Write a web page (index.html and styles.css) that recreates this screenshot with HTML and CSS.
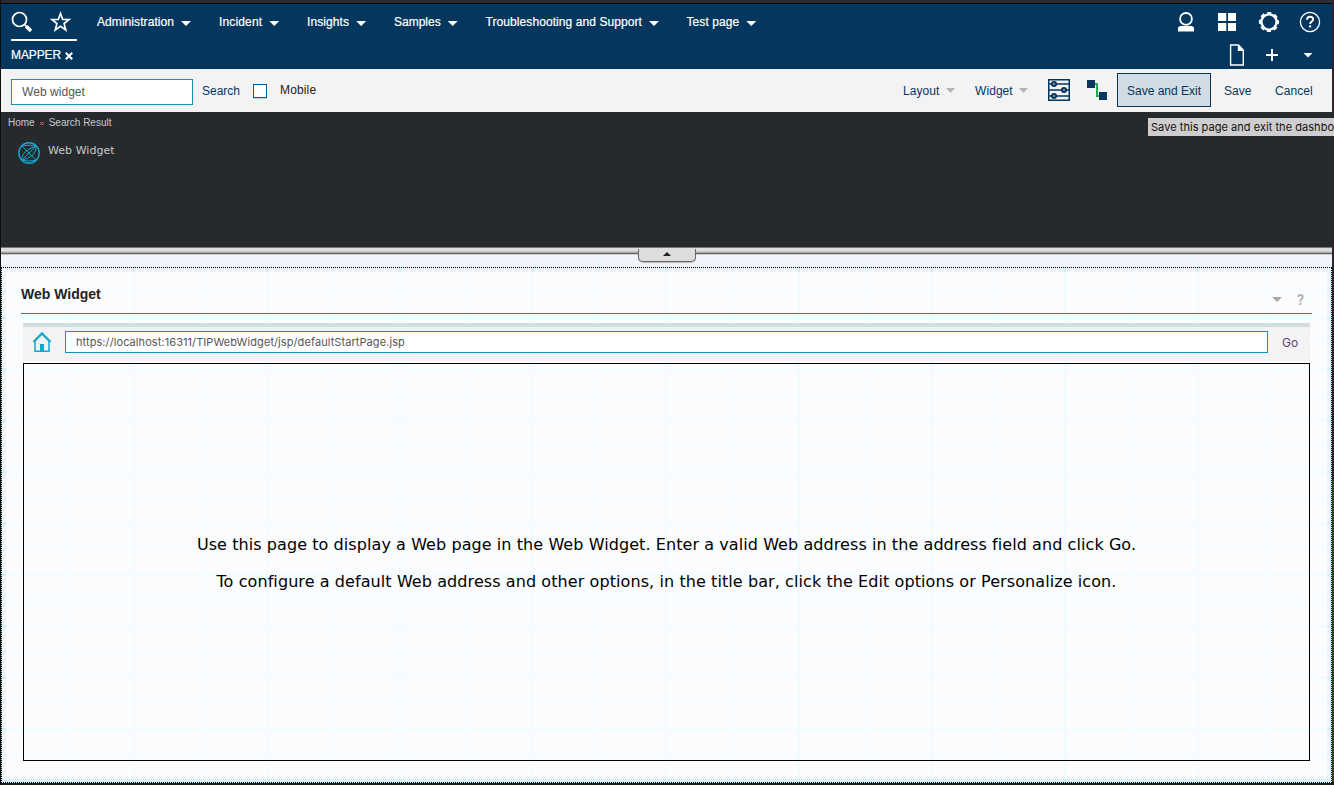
FILE: index.html
```html
<!DOCTYPE html>
<html lang="en">
<head>
<meta charset="utf-8">
<title>Mapper</title>
<link rel="stylesheet" href="styles.css">
</head>
<body>
<div class="app">
  <header class="header">
    <div class="quick">
      <svg class="quick-icon" width="22" height="22" viewBox="0 0 22 22"><circle cx="8.5" cy="8.5" r="7" fill="none" stroke="#fff" stroke-width="1.7"/><path d="M13.5 13.5l2 2" stroke="#fff" stroke-width="1.7"/><path d="M15.200 15.200l4.800 4.800" stroke="#fff" stroke-width="3.600"/></svg>
      <svg class="quick-icon" width="22" height="22" viewBox="0 0 22 22"><path d="M10.500 2.500l2.200 6H19l-4.900 4.100 1.700 6.400-5.300-3.600-5.300 3.600 1.700-6.400L2 8.500h6.300z" fill="none" stroke="#fff" stroke-width="1.700"/></svg>
    </div>
    <nav class="nav">
      <span class="nav-item w-admin">Administration<i class="caret"></i></span>
      <span class="nav-item w-incident">Incident<i class="caret"></i></span>
      <span class="nav-item w-insights">Insights<i class="caret"></i></span>
      <span class="nav-item w-samples">Samples<i class="caret"></i></span>
      <span class="nav-item w-support">Troubleshooting and Support<i class="caret"></i></span>
      <span class="nav-item w-test">Test page<i class="caret"></i></span>
    </nav>
    <div class="tools">
      <svg width="18" height="22" viewBox="0 0 18 22"><circle cx="9" cy="7.900" r="5.900" fill="none" stroke="#fff" stroke-width="1.800"/><path d="M1 20.500v-4l2-1.500h12l2 1.500v4z" fill="#fff"/></svg>
      <svg width="18" height="22" viewBox="0 0 18 22"><path d="M0 2h8.300v8H0zM10 2h8v8h-8zM0 12h8.300v8H0zM10 12h8v8h-8z" fill="#fff"/></svg>
      <svg width="22" height="22" viewBox="0 0 22 22"><circle cx="11" cy="11" r="7.600" fill="none" stroke="#fff" stroke-width="2.400"/><circle cx="11" cy="11" r="9" fill="none" stroke="#fff" stroke-width="2.200" stroke-dasharray="4 3.069" stroke-dashoffset="2"/></svg>
      <svg width="22" height="22" viewBox="0 0 22 22"><circle cx="11" cy="11" r="9.600" fill="none" stroke="#fff" stroke-width="1.300"/><path d="M8 8.800c0-4.100 6.200-3.900 6.200-.5 0 2.200-3.100 2.200-3.100 4.800" fill="none" stroke="#fff" stroke-width="1.900"/><path d="M10 14.400h2.200v2H10z" fill="#fff"/></svg>
    </div>
    <div class="tab">MAPPER<svg width="8" height="8" viewBox="0 0 8 8"><path d="M.8 .8l6.400 6.400M7.200 .8L.8 7.200" stroke="#fff" stroke-width="2"/></svg></div>
    <div class="page-tools">
      <svg width="16" height="22" viewBox="0 0 16 22"><path d="M1.600 1h7.800l4.900 5v15H1.600z" fill="none" stroke="#fff" stroke-width="1.400"/><path d="M8.800 1l5.500 5.900H8.800z" fill="#fff"/></svg>
      <svg width="12" height="12" viewBox="0 0 12 12"><path d="M6 0v12M0 6h12" stroke="#fff" stroke-width="2"/></svg>
      <i class="caret"></i>
    </div>
  </header>

  <div class="toolbar">
    <input class="search" type="text" value="Web widget">
    <span class="search-link">Search</span>
    <span class="checkbox"></span>
    <span class="mobile">Mobile</span>
    <div class="actions">
      <span class="menu menu-layout">Layout<i class="caret gray"></i></span>
      <span class="menu menu-widget">Widget<i class="caret gray"></i></span>
      <svg class="sliders" width="22" height="22" viewBox="0 0 22 22"><rect x=".75" y=".75" width="20.500" height="20.500" fill="none" stroke="#05365d" stroke-width="1.500"/><path d="M1 5h20M1 11h20M1 17h20" stroke="#05365d" stroke-width="1.500"/><g fill="#7790a8" stroke="#05365d" stroke-width="1.900"><circle cx="6" cy="5" r="2.100"/><circle cx="16" cy="11" r="2.100"/><circle cx="6" cy="17" r="2.100"/></g></svg>
      <svg class="wire" width="20" height="20" viewBox="0 0 20 20"><path d="M8 4h2v12h2" fill="none" stroke="#24ab4d" stroke-width="2"/><path d="M0 0h8v8H0zM12 12h8v8h-8z" fill="#05365d"/></svg>
      <button class="save-exit">Save and Exit</button>
      <span class="save">Save</span>
      <span class="cancel">Cancel</span>
    </div>
  </div>

  <section class="palette">
    <div class="crumbs">Home<svg width="4" height="3" viewBox="0 0 4 3"><path d="M.3 0l1.400 1.500L.3 3M2.200 0l1.400 1.500L2.200 3" fill="none" stroke="#f0666c"/></svg>Search Result</div>
    <div class="result">
      <svg width="22" height="22" viewBox="0 0 22 22" fill="none" stroke="#18a3cf"><circle cx="11" cy="11" r="10.200" stroke-width="1.400"/><path d="M3.800 3.800l14.400 14.400M3.800 18.200L18.200 3.800"/><path d="M3.800 3.800Q11 2.500 18.200 3.800Q18.500 15 3.800 18.200Q11 20 18.200 18.200"/><path d="M3.800 18.200Q2 10 18.200 3.800"/></svg>
      <span>Web Widget</span>
    </div>
    <div class="tooltip">Save this page and exit the dashbo</div>
  </section>

  <div class="splitter"><div class="handle"><i></i></div></div>

  <main class="canvas">
    <div class="widget">
      <div class="title">
        <h1>Web Widget</h1>
        <i class="caret title-caret"></i>
        <span class="help">?</span>
      </div>
      <div class="address">
        <svg width="20" height="22" viewBox="0 0 20 22"><path d="M1.500 11L10 2.500 18.500 11" fill="none" stroke="#18a5d2" stroke-width="2.300"/><path d="M3 10v10.300h14V10" fill="none" stroke="#18a5d2" stroke-width="1.500"/><path d="M8 13h4v8H8z" fill="#18a5d2"/></svg>
        <input class="url" type="text" value="https://localhost:16311/TIPWebWidget/jsp/defaultStartPage.jsp">
        <span class="go">Go</span>
      </div>
      <div class="frame">
        <p class="line-one">Use this page to display a Web page in the Web Widget. Enter a valid Web address in the address field and click Go.</p>
        <p class="line-two">To configure a default Web address and other options, in the title bar, click the Edit options or Personalize icon.</p>
      </div>
    </div>
  </main>
</div>
</body>
</html>
```
FILE: styles.css
```css
* { box-sizing: border-box; }
html, body { width: 1334px; height: 785px; overflow: hidden; }
body {
  margin: 0;
  padding: 0 2px 2px 1px;
  background:
    linear-gradient(#0b0f0d, #0b0f0d) 0 0 / 1px 100% no-repeat,
    linear-gradient(#33202f 0 480px, #35421b 480px 782px, #182114 782px);
  font: 12px/16px "Liberation Sans", Arial, sans-serif;
  color: #05365d;
}
.app { height: 783px; display: flex; flex-direction: column; border-top: 3px solid #2c2b30; }
svg { flex: none; display: block; }
input { outline: 0; font: inherit; border-radius: 0; margin: 0; }

.caret { flex: none; width: 10px; height: 5px; background: #fff; clip-path: polygon(0 0, 100% 0, 50% 100%); }
.caret.gray { background: #b1b4b9; width: 9px; height: 5px; }

.header {
  height: 66px;
  flex: none;
  display: grid;
  grid-template-columns: 86px 1fr auto;
  grid-template-rows: 38px 28px;
  background: #05365d;
  border-top: 1px solid #020b15;
  color: #fff;
}
.quick { display: flex; gap: 17px; margin-left: 10px; width: 66px; height: 37px; padding-top: 7px; border-bottom: 2px solid #fff; }
.nav { display: flex; padding: 10px 0 0 10px; height: 30px; -webkit-text-stroke: .2px #fff; }
.nav-item { display: flex; gap: 7px; white-space: nowrap; }
.nav-item .caret { margin-top: 7px; }
.w-admin { width: 122px; letter-spacing: .07px; }
.w-incident { width: 88px; letter-spacing: .15px; }
.w-insights { width: 87px; letter-spacing: .1px; }
.w-samples { width: 91.500px; }
.w-support { width: 201px; letter-spacing: .08px; }
.w-test { letter-spacing: .08px; }
.tools { display: flex; padding: 7px 11px 0 0; }
.tools svg:nth-child(1) { margin-right: 23px; }
.tools svg:nth-child(2) { margin-right: 22px; }
.tools svg:nth-child(3) { margin-right: 19px; }
.tab { padding: 5px 0 0 10px; display: flex; gap: 4px; -webkit-text-stroke: .2px #fff; letter-spacing: -.1px; }
.tab svg { margin-top: 5px; }
.page-tools { grid-column: 3; display: flex; justify-content: flex-end; align-items: center; padding: 0 19px 2px 0; }
.page-tools svg:first-child { margin-right: 21px; }
.page-tools svg:nth-child(2) { margin-right: 25px; }

.toolbar { height: 43px; flex: none; display: flex; background: #f3f3f3; padding-left: 10px; }
.search { width: 182px; height: 26px; margin-top: 10px; border: 1px solid #1790bf; padding: 0 10px; background: #fff; color: #555; letter-spacing: .05px; }
.search-link { margin: 14px 0 0 9px; width: 51px; }
.checkbox { width: 14px; height: 14px; margin-top: 15px; border: 1px solid #075b97; background: #fff; box-shadow: 0 1px #c2ccd5; }
.mobile { margin: 13px 0 0 13px; color: #222; letter-spacing: .15px; }
.actions { margin-left: auto; display: flex; }
.menu { display: flex; justify-content: space-between; align-items: center; height: 43px; letter-spacing: .07px; }
.menu-layout { width: 52px; margin-right: 20px; }
.menu-widget { width: 53px; margin-right: 20px; }
.sliders { margin-top: 10px; }
.wire { margin: 11px 10px 0 17px; }
.save-exit { width: 94px; height: 34px; margin: 4px 13px 0 0; padding: 1px 0 0; border: 1px solid #05365d; background: #d1dce4; font: inherit; color: inherit; white-space: nowrap; }
.save { width: 51px; padding-top: 14px; }
.cancel { width: 57px; padding-top: 14px; letter-spacing: .05px; }

.palette { position: relative; height: 135px; flex: none; background: #262a2d; color: #c8c8c8; padding: 3px 0 0 7px; }
.crumbs { display: flex; align-items: center; gap: 5px; font-size: 10px; }
.result { display: flex; gap: 8px; padding: 11px 0 0 10px; font: 11px/16px "DejaVu Sans", sans-serif; letter-spacing: .04px; }
.result span { margin-top: 1px; }
.tooltip {
  position: absolute;
  left: 1147px;
  top: 6px;
  width: 186px;
  height: 18px;
  padding-left: 3px;
  white-space: nowrap;
  background: #cfcdce;
  color: #111;
  font: 11px/18px Inter, sans-serif;
  letter-spacing: .04px;
}

.splitter { position: relative; height: 20px; flex: none; background: linear-gradient(#777 0 1px, #ddd 1px 4px, #c8c8c8 4px 5px, #aaa 5px 6px, #666 6px 7px, #ccc 7px 8px, #f1f4fa 8px); }
.handle {
  position: absolute;
  left: 637px;
  top: 2px;
  width: 58px;
  height: 13px;
  border: 1px solid #666;
  border-top: 0;
  border-radius: 0 0 5px 5px;
  background: #ddd;
  box-shadow: 0 1px 1px #bbb;
  display: flex;
  justify-content: center;
}
.handle i { width: 8px; height: 4px; margin-top: 3px; background: #222; clip-path: polygon(50% 0, 100% 100%, 0 100%); }

.canvas {
  position: relative;
  flex: 1;
  min-height: 0;
  padding: 4px;
  border: 1px dotted #000;
  background-color: #f1f4fa;
  background-image:
    linear-gradient(90deg, #c9f2ff 0 2px, transparent 2px 67px, #d2f3ff 67px 68px, transparent 68px),
    linear-gradient(#c9f2ff 0 2px, transparent 2px 26px, #d2f3ff 26px 27px, transparent 27px);
  background-size: 133px 100%, 100% 51.400px;
  background-position: -2px 0, 0 49px;
}
.widget {
  height: 507px;
  padding: 0 15px;
  background: rgba(253, 254, 255, .8);
}
.title { height: 42px; display: flex; border-bottom: 1px solid #1686b3; }
h1 { flex: 1; margin: 14px 0 0; font: bold 14px/16px "Liberation Sans", sans-serif; letter-spacing: 0; color: #222; }
.title-caret { margin: 25px 15px 0 0; background: #aaa; }
.help { width: 15px; margin-top: 20px; font: bold 14px/16px Roboto, sans-serif; color: #b2b2b2; }
.address { height: 38px; display: flex; margin: 9px 2px 0; border-top: 4px solid #d1dce3; background: #f3f3f3; padding: 4px 0 0 9px; }
.url { width: 1203px; height: 22px; margin-left: 13px; border: 1px solid #1790bf; padding: 0 10px; background: #fff; color: #555; font: 11px Inter, sans-serif; letter-spacing: .08px; }
.go { margin: 4px 0 0 14px; font: 12px/16px Inter, sans-serif; color: #653b78; }
.frame { height: 398px; margin: 2px 2px 0; border: 1px solid #000; padding-top: 171px; text-align: center; color: #000; font: 16px/19px "DejaVu Sans", sans-serif; white-space: nowrap; }
.frame p { margin: 0 -20px 18px; }
.line-one { letter-spacing: .075px; }
.line-two { letter-spacing: .085px; }
```
